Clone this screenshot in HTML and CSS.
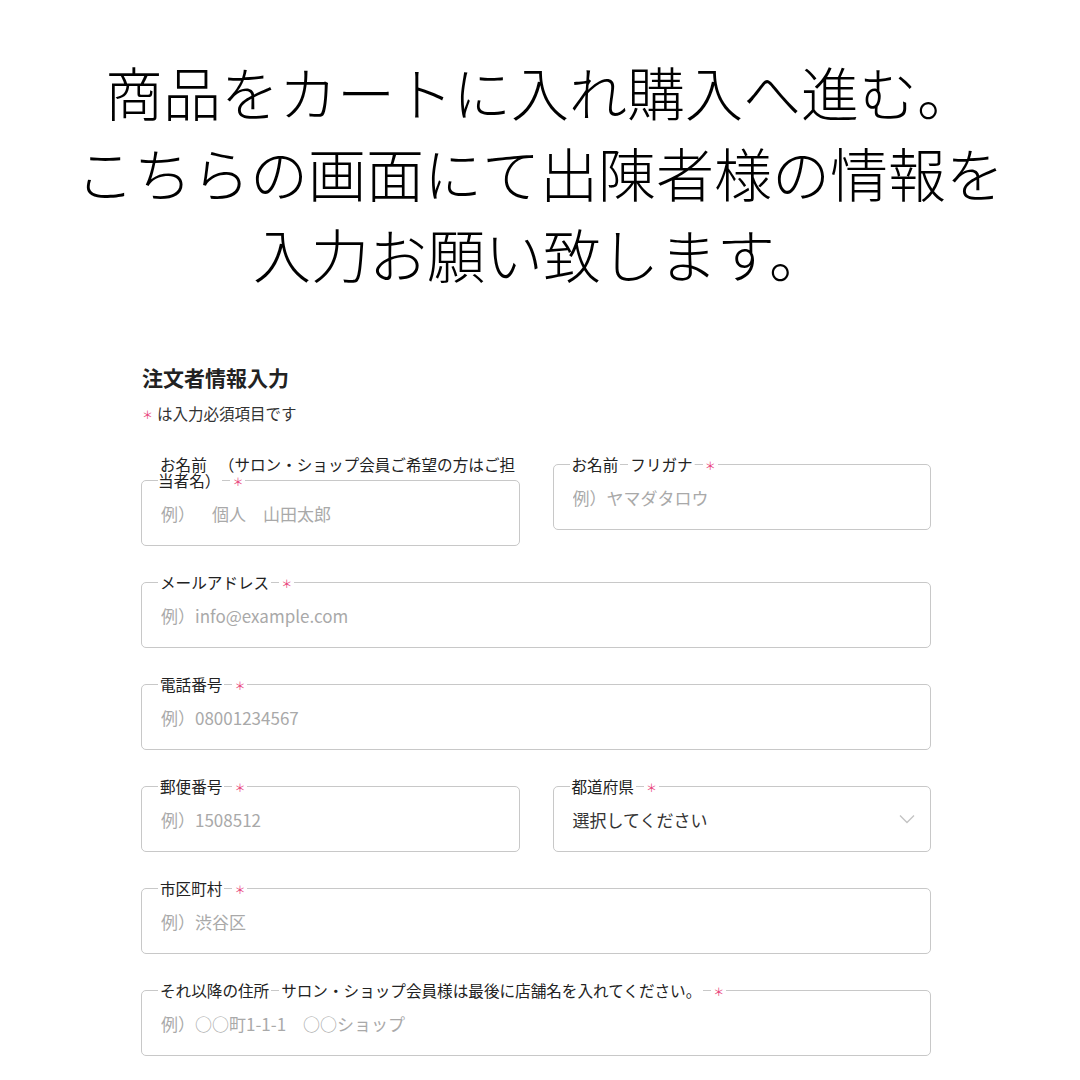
FILE: index.html
```html
<!DOCTYPE html>
<html lang="ja">
<head>
  <meta charset="UTF-8" />
  <title>注文者情報入力</title>
  <link rel="stylesheet" href="styles.css">
</head>
<body>
  <!-- 案内文 -->
  <header class="intro">
    <p>商品をカートに入れ購入へ進む。<br>こちらの画面にて出陳者様の情報を<br>入力お願い致します。</p>
  </header>

  <main class="order-form">
    <h2 class="form-title">注文者情報入力</h2>
    <p class="form-note"><span class="req">＊</span>は入力必須項目です</p>

    <div class="fields">
      <div class="field">
        <label class="field-label"><span>お名前</span><span>（サロン・ショップ会員ご希望の方はご担当者名）</span><span class="req">＊</span></label>
        <input class="field-input" type="text" placeholder="例）　個人　山田太郎">
      </div>

      <div class="field">
        <label class="field-label"><span>お名前</span><span>フリガナ</span><span class="req">＊</span></label>
        <input class="field-input" type="text" placeholder="例）ヤマダタロウ">
      </div>

      <div class="field wide">
        <label class="field-label"><span>メールアドレス</span><span class="req">＊</span></label>
        <input class="field-input" type="email" placeholder="例）info@example.com">
      </div>

      <div class="field wide">
        <label class="field-label"><span>電話番号</span><span class="req">＊</span></label>
        <input class="field-input" type="tel" placeholder="例）08001234567">
      </div>

      <div class="field">
        <label class="field-label"><span>郵便番号</span><span class="req">＊</span></label>
        <input class="field-input" type="text" placeholder="例）1508512">
      </div>

      <div class="field">
        <label class="field-label"><span>都道府県</span><span class="req">＊</span></label>
        <div class="field-input field-select">
          <span>選択してください</span>
          <svg class="chevron" width="16" height="10" viewBox="0 0 16 10">
            <polyline points="1,1.5 8,8.5 15,1.5" fill="none" stroke="#c4c4c4" stroke-width="1.4" />
          </svg>
        </div>
      </div>

      <div class="field wide">
        <label class="field-label"><span>市区町村</span><span class="req">＊</span></label>
        <input class="field-input" type="text" placeholder="例）渋谷区">
      </div>

      <div class="field wide">
        <label class="field-label"><span>それ以降の住所</span><span>サロン・ショップ会員様は最後に店舗名を入れてください。</span><span class="req">＊</span></label>
        <input class="field-input" type="text" placeholder="例）○○町1-1-1　○○ショップ">
      </div>
    </div>
  </main>
</body>
</html>
```

FILE: styles.css
```css
html, body {
  margin: 0;
  padding: 0;
  background: #fff;
  color: #222;
  font-family: "Noto Sans CJK JP", "Noto Sans", sans-serif;
  text-spacing-trim: space-all;
}

/* 案内文 */
.intro {
  padding-top: 51px;
  text-align: center;
}

.intro p {
  margin: 0;
  font-size: 58px;
  line-height: 81px;
  font-weight: 300;
  color: #000;
}

/* フォーム */
.order-form {
  width: 790px;
  margin: 69px 0 0 141px;
}

.form-title {
  margin: 0 0 0 1px;
  font-size: 21px;
  line-height: 28px;
  font-weight: 700;
  color: #222;
}

.form-note {
  margin: 12px 0 0 1px;
  font-size: 15.5px;
  line-height: 20px;
  color: #333;
}

.req {
  color: #e8417a;
  font-size: 11px;
  line-height: 0;
  margin-right: 4px;
  position: relative;
  top: -1px;
}

.fields {
  display: grid;
  grid-template-columns: 1fr 1fr;
  column-gap: 33px;
  row-gap: 28px;
  align-items: start;
  margin-top: 33px;
}

.field {
  display: flex;
  flex-direction: column;
}

.field.wide {
  grid-column: 1 / -1;
}

.field-label {
  position: relative;
  z-index: 1;
  padding: 0 0 0 17px;
  margin-bottom: -8px;
  font-size: 15.6px;
  line-height: 16px;
  color: #222;
}

/* 枠線の上だけ白で隠す */
.field-label span {
  padding: 0 2px;
  background: linear-gradient(#fff, #fff) center / 100% 6px no-repeat;
}

.field-label span + span {
  margin-left: 8px;
}

.field-label .req {
  margin-right: 0;
}

.field-input {
  box-sizing: border-box;
  width: 100%;
  height: 66px;
  margin: 0;
  padding: 0 19px;
  border: 1px solid #c8c8c8;
  border-radius: 5px;
  background: #fff;
  font-family: "Noto Sans CJK JP", "Noto Sans", sans-serif;
  font-size: 17px;
  color: #333;
  outline: none;
  text-spacing-trim: space-all;
}

.field-input::placeholder {
  color: #a9a9a9;
}

.field-select {
  display: flex;
  align-items: center;
  justify-content: space-between;
  padding-right: 15px;
}
```
